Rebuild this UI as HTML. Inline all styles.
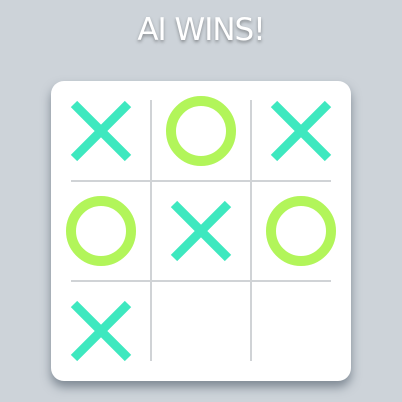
<!DOCTYPE html>
<html><head><meta charset="utf-8"><style>
html,body{margin:0;padding:0;width:402px;height:402px;background:#cdd3d9;overflow:hidden}
.t{position:absolute;left:0;top:12px;width:402px;text-align:center;font-family:"DejaVu Sans","Liberation Sans",sans-serif;font-size:31px;color:#fff;letter-spacing:-1px;text-shadow:0 2px 3px rgba(0,0,0,.35);font-weight:normal}
.card{position:absolute;left:51px;top:81px;width:300px;height:300px;background:#fff;border-radius:13px;box-shadow:0 6px 10px rgba(60,75,90,.55)}
svg{position:absolute;left:0;top:0}
</style></head><body>
<div class="t">AI WINS!</div>
<div class="card"></div>
<svg width="402" height="402">
<g stroke="#d0d3d6" stroke-width="2">
<line x1="151" y1="100" x2="151" y2="361"/>
<line x1="251" y1="100" x2="251" y2="361"/>
<line x1="71" y1="181" x2="331" y2="181"/>
<line x1="71" y1="281" x2="331" y2="281"/>
</g>
<g stroke="#3ee8bf" stroke-width="9">
<path d="M74 104L128 158M128 104L74 158"/>
<path d="M274 104L328 158M328 104L274 158"/>
<path d="M174 204L228 258M228 204L174 258"/>
<path d="M74 304L128 358M128 304L74 358"/>
</g>
<g stroke="#b2f55a" stroke-width="10" fill="none">
<circle cx="201" cy="131" r="30"/>
<circle cx="101" cy="231" r="30"/>
<circle cx="301" cy="231" r="30"/>
</g>
</svg>
</body></html>
